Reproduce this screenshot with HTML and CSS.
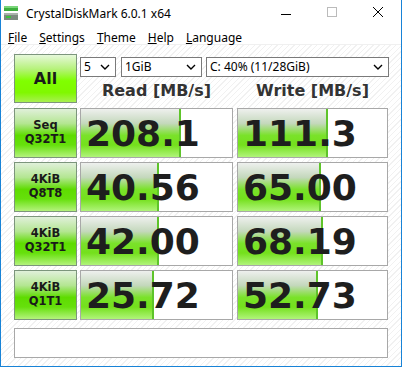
FILE: index.html
```html
<!DOCTYPE html>
<html>
<head>
<meta charset="utf-8">
<link rel="stylesheet" href="styles.css">
</head>
<body>
<div class="window">
  <div class="titlebar">
    <svg class="appicon" width="14" height="14" viewBox="0 0 14 14">
      <rect x="0" y="0" width="14" height="5" fill="#3dae3d"/>
      <rect x="0" y="0" width="14" height="2" fill="#7ad67a"/>
      <rect x="0" y="7" width="14" height="7" fill="#7d8a80"/>
      <rect x="0" y="7" width="14" height="2" fill="#a9b3ab"/>
      <rect x="2" y="10" width="5" height="2" fill="#3dc23d"/>
    </svg>
    <span class="title">CrystalDiskMark 6.0.1 x64</span>
    <div class="controls">
      <svg class="ctl" width="46" height="30" viewBox="0 0 46 30"><line x1="18" y1="15.5" x2="28" y2="15.5" stroke="#000" stroke-width="1"/></svg>
      <svg class="ctl" width="46" height="30" viewBox="0 0 46 30"><rect x="18.5" y="8.5" width="9" height="9" fill="none" stroke="#bbb" stroke-width="1"/></svg>
      <svg class="ctl" width="46" height="30" viewBox="0 0 46 30"><path d="M18 8 L28 18 M28 8 L18 18" stroke="#000" stroke-width="1"/></svg>
    </div>
  </div>
  <div class="menubar">
    <span><u>F</u>ile</span>
    <span><u>S</u>ettings</span>
    <span><u>T</u>heme</span>
    <span><u>H</u>elp</span>
    <span><u>L</u>anguage</span>
  </div>
  <div class="content">
    <div class="toprow">
      <div class="btn allbtn">All</div>
      <div class="topright">
        <div class="selects">
          <div class="select s1"><span>5</span><svg class="chev" width="10" height="6" viewBox="0 0 10 6"><path d="M1 1 L5 5 L9 1" fill="none" stroke="#000" stroke-width="1.4"/></svg></div>
          <div class="select s2"><span>1GiB</span><svg class="chev" width="10" height="6" viewBox="0 0 10 6"><path d="M1 1 L5 5 L9 1" fill="none" stroke="#000" stroke-width="1.4"/></svg></div>
          <div class="select s3"><span>C: 40% (11/28GiB)</span><svg class="chev" width="10" height="6" viewBox="0 0 10 6"><path d="M1 1 L5 5 L9 1" fill="none" stroke="#000" stroke-width="1.4"/></svg></div>
        </div>
        <div class="headers">
          <div class="hdr hread">Read [MB/s]</div>
          <div class="hdr hwrite">Write [MB/s]</div>
        </div>
      </div>
    </div>
    <div class="row">
      <div class="btn label">Seq<br>Q32T1</div>
      <div class="val vread"><div class="fill" style="width:100px"></div><span>208.1</span></div>
      <div class="val vwrite"><div class="fill" style="width:90px"></div><span>111.3</span></div>
    </div>
    <div class="row">
      <div class="btn label">4KiB<br>Q8T8</div>
      <div class="val vread"><div class="fill" style="width:78px"></div><span>40.56</span></div>
      <div class="val vwrite"><div class="fill" style="width:83px"></div><span>65.00</span></div>
    </div>
    <div class="row">
      <div class="btn label">4KiB<br>Q32T1</div>
      <div class="val vread"><div class="fill" style="width:78px"></div><span>42.00</span></div>
      <div class="val vwrite"><div class="fill" style="width:85px"></div><span>68.19</span></div>
    </div>
    <div class="row">
      <div class="btn label">4KiB<br>Q1T1</div>
      <div class="val vread"><div class="fill" style="width:73px"></div><span>25.72</span></div>
      <div class="val vwrite"><div class="fill" style="width:80px"></div><span>52.73</span></div>
    </div>
    <div class="comment"></div>
  </div>
</div>
</body>
</html>
```
FILE: styles.css
```css
* { box-sizing: border-box; }
html, body { margin: 0; padding: 0; }
body { width: 402px; height: 367px; overflow: hidden; background: #fff; }
.window {
  width: 402px; height: 367px;
  border: 1px solid #1883d7; border-top: none;
  display: flex; flex-direction: column;
  background: #fff;
}
.titlebar {
  height: 30px; display: flex; align-items: center;
  font-family: "Noto Sans", "Open Sans", sans-serif; font-size: 12px; color: #000;
  background: #fff;
}
.appicon { margin-left: 3px; margin-right: 8px; margin-top: -4px; }
.title { margin-top: -3px; }
.controls { margin-left: auto; display: flex; margin-top: -2px; }
.ctl { display: block; }
.menubar {
  height: 15px; display: flex; align-items: center;
  font-family: "Noto Sans", "Open Sans", sans-serif; font-size: 12px; color: #000;
  padding-left: 7px;
  border-bottom: 1px solid #f0f0f0;
}
.menubar span { margin-right: 12px; line-height: 15px; }
.menubar u { text-decoration-thickness: 1px; text-underline-offset: 1px; }
.content {
  flex: 1;
  padding: 9px 0 0 13px;
  background: repeating-linear-gradient(135deg, #ffffff 0px, #ffffff 3px, #f1f1f1 3px, #f1f1f1 4px);
  display: flex; flex-direction: column;
}
.toprow { display: flex; height: 49px; }
.btn {
  border: 1px solid #7c957c;
  display: flex; align-items: center; justify-content: center; text-align: center;
  font-family: "DejaVu Sans", sans-serif; font-weight: bold; color: #1a1a1a;
}
.allbtn {
  width: 63px; height: 49px; font-size: 16px;
  background: linear-gradient(180deg, #e6f8da 0%, #b6f27a 30%, #80ff00 55%, #80f800 80%, #a8f050 100%);
}
.topright { margin-left: 3px; display: flex; flex-direction: column; }
.selects { display: flex; margin-top: 3px; height: 20px; }
.select {
  height: 20px; background: #fff; border: 1px solid #7a7a7a;
  display: flex; align-items: center; justify-content: space-between;
  padding: 0 5px 0 3px;
  font-family: "Noto Sans", "Open Sans", sans-serif; font-size: 12px; color: #000;
}
.select span { line-height: 18px; }
.s1 { width: 36px; }
.s2 { width: 81px; margin-left: 5px; }
.s3 { width: 183px; margin-left: 4px; }
.chev { display: block; }
.headers { display: flex; margin-top: 4px; }
.hdr {
  font-family: "DejaVu Sans", sans-serif; font-weight: bold; font-size: 16px; color: #333;
  text-align: center; line-height: 20px;
}
.hread { width: 153px; }
.hwrite { width: 151px; margin-left: 4px; }
.row { display: flex; height: 50px; margin-top: 5px; }
.row + .row { margin-top: 4px; }
.label {
  width: 63px; height: 50px; font-size: 11.5px; line-height: 14px;
  background: linear-gradient(180deg, #e0f0da 0%, #b4e692 30%, #5edc00 55%, #66e00c 75%, #b4f27c 100%);
  padding-bottom: 2px;
}
.val {
  position: relative;
  height: 50px; background: #fff; border: 1px solid #a8a8a8;
  display: flex; align-items: center;
  overflow: hidden;
}
.vread { width: 153px; margin-left: 3px; }
.vwrite { width: 151px; margin-left: 4px; }
.fill {
  position: absolute; left: 0; top: 0; bottom: 0;
  background: linear-gradient(180deg, #eef0ee 0%, #c4d8bc 30%, #7ae22a 55%, #74e01c 75%, #b0f47a 100%);
  border-right: 2px solid #5ec42a;
}
.val span {
  position: relative;
  font-family: "DejaVu Sans", sans-serif; font-weight: bold; font-size: 36px; color: #1e1e1e;
  padding-left: 5px; line-height: 40px; margin-top: 1px;
}
.comment {
  margin-top: 8px; width: 374px; height: 30px;
  background: #fff; border: 1px solid #a8a8a8;
}
```
